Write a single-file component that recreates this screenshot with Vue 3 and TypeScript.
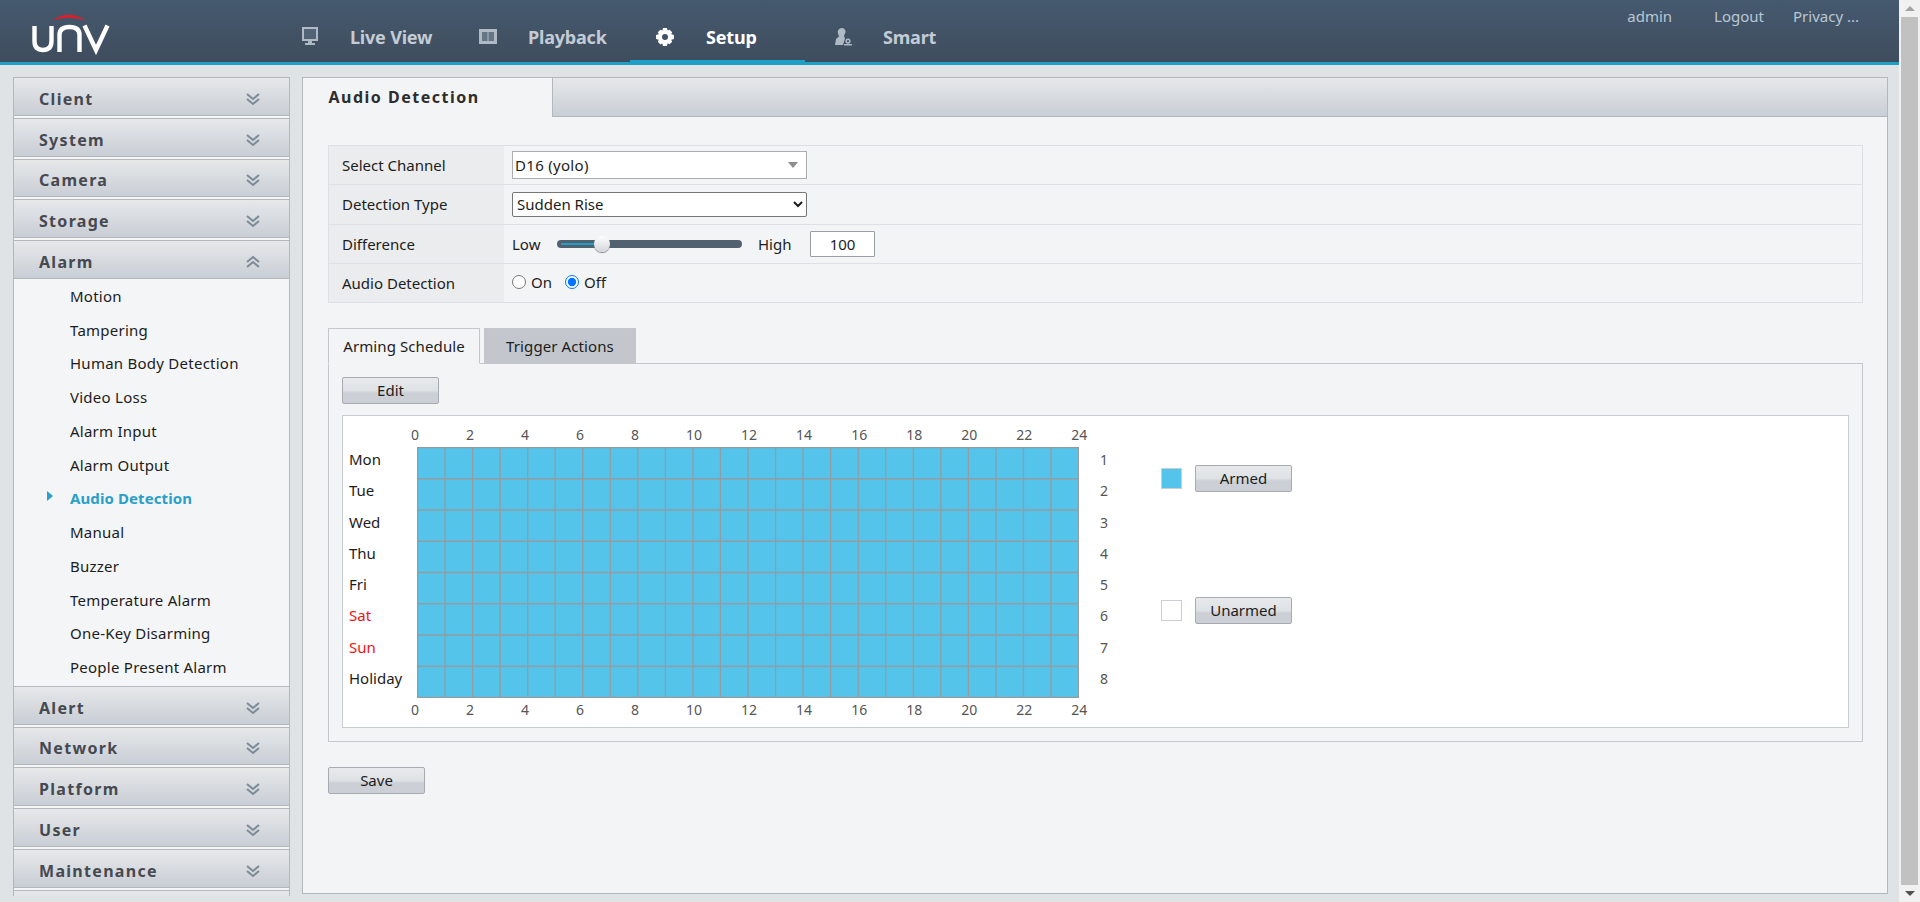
<script setup lang="ts">
import { ref } from "vue";

const navItems = [
  { label: "Live View", icon: "monitor", active: false },
  { label: "Playback", icon: "film", active: false },
  { label: "Setup", icon: "gear", active: true },
  { label: "Smart", icon: "user", active: false },
];

const menuBefore = ["Client", "System", "Camera", "Storage"];
const menuAfter = ["Alert", "Network", "Platform", "User", "Maintenance", ""];
const alarmItems = [
  "Motion",
  "Tampering",
  "Human Body Detection",
  "Video Loss",
  "Alarm Input",
  "Alarm Output",
  "Audio Detection",
  "Manual",
  "Buzzer",
  "Temperature Alarm",
  "One-Key Disarming",
  "People Present Alarm",
];

const days = ["Mon", "Tue", "Wed", "Thu", "Fri", "Sat", "Sun", "Holiday"];
const hours = [0, 2, 4, 6, 8, 10, 12, 14, 16, 18, 20, 22, 24];
const audioDetection = ref("off");
const detectionType = ref("rise");

// grid line positions of the weekly schedule
const cellW = 661 / 24;
const cellH = 250 / 8;
const colLines = Array.from({ length: 25 }, (_, i) => i * cellW + 0.5);
const rowLines = Array.from({ length: 9 }, (_, i) => i * cellH + 0.5);
</script>

<template>
  <div class="page">
    <div class="page__main">
      <header class="topbar">
        <svg class="topbar__logo" width="80" height="42" viewBox="0 0 80 42" fill="none">
          <path d="M21 7.500Q38 -4 55 7.500Q38 1.800 21 7.500Z" fill="#d8202c" />
          <path d="M3.500 13V28Q3.500 37 12 37Q20.500 37 20.500 28V13" stroke="#fff" stroke-width="4.400" />
          <path d="M28.500 39V22Q28.500 14 38.500 14Q48.500 14 48.500 22V39" stroke="#fff" stroke-width="4.400" />
          <path d="M53.500 12.500L65 37L76.500 12.500" stroke="#fff" stroke-width="4.400" />
        </svg>
        <nav class="topbar__nav">
          <a
            v-for="item in navItems"
            :key="item.label"
            class="topbar__link"
            :class="{ 'topbar__link--active': item.active }"
          >
            <svg class="topbar__icon" width="20" height="22" viewBox="0 0 20 22" fill="currentColor">
              <template v-if="item.icon === 'monitor'">
                <path d="M2 1h16v14H2z" />
                <path d="M4 3h12v10H4z" fill="#55677a" />
                <path d="M8 15h4v2H8zM5 17h10v2H5z" />
              </template>
              <template v-else-if="item.icon === 'film'">
                <path d="M1 3h18v15H1z" />
                <path d="M4 6h5.500v9H4zM10.500 6H16v9h-5.500z" fill="#6d7c8b" />
              </template>
              <template v-else-if="item.icon === 'gear'">
                <path
                  fill-rule="evenodd"
                  d="M8 2h4l.6 2.600 2-.9 2.600 2.600-1 2 2.800.7v4l-2.800.7 1 2-2.600 2.600-2-1L12 20H8l-.6-2.600-2 1-2.600-2.600 1-2L1 13V9l2.800-.7-1-2 2.600-2.600 2 .9zM10 8a3 3 0 1 0 0 6 3 3 0 0 0 0-6z"
                />
              </template>
              <template v-else>
                <path d="M9 2a3.600 3.600 0 0 1 3 5.600L11 10l1 2.500-2 6.500H2l1-6 3-2.500-1-3A4 4 0 0 1 9 2z" />
                <path d="M15 12.500a2.600 2.600 0 1 1 0 5.200 2.600 2.600 0 0 1 0-5.200zM15 14a1.100 1.100 0 1 0 0 2.200 1.100 1.100 0 0 0 0-2.200zM11 18h8v1.400h-8z" />
              </template>
            </svg>
            <span>{{ item.label }}</span>
          </a>
        </nav>
        <div class="topbar__user">
          <span class="topbar__admin">admin</span>
          <a>Logout</a>
          <a>Privacy ...</a>
        </div>
      </header>

      <div class="body">
        <aside class="sidebar">
          <div v-for="name in menuBefore" :key="name" class="sidebar__head">
            <span>{{ name }}</span>
            <svg width="16" height="14" viewBox="0 0 16 14" fill="none" stroke="#7d8a98" stroke-width="2">
              <path d="M2 2l6 5 6-5M2 7l6 5 6-5" />
            </svg>
          </div>
          <div class="sidebar__head sidebar__head--open">
            <span>Alarm</span>
            <svg width="16" height="14" viewBox="0 0 16 14" fill="none" stroke="#7d8a98" stroke-width="2">
              <path d="M2 7l6-5 6 5M2 12l6-5 6 5" />
            </svg>
          </div>
          <ul class="sidebar__list">
            <li
              v-for="item in alarmItems"
              :key="item"
              class="sidebar__item"
              :class="{ 'sidebar__item--active': item === 'Audio Detection' }"
            >
              {{ item }}
            </li>
          </ul>
          <div v-for="name in menuAfter" :key="name" class="sidebar__head">
            <template v-if="name">
              <span>{{ name }}</span>
              <svg width="16" height="14" viewBox="0 0 16 14" fill="none" stroke="#7d8a98" stroke-width="2">
                <path d="M2 2l6 5 6-5M2 7l6 5 6-5" />
              </svg>
            </template>
          </div>
        </aside>

        <main class="content">
          <div class="content__strip">
            <div class="content__title">Audio Detection</div>
          </div>

          <div class="content__inner">
            <div class="form">
              <div class="form__row">
                <div class="form__label">Select Channel</div>
                <div class="form__value">
                  <div class="combo">
                    <span>D16 (yolo)</span>
                    <i class="combo__arrow"></i>
                  </div>
                </div>
              </div>
              <div class="form__row">
                <div class="form__label">Detection Type</div>
                <div class="form__value">
                  <select v-model="detectionType" class="form__select">
                    <option value="rise">Sudden Rise</option>
                    <option value="fall">Sudden Fall</option>
                  </select>
                </div>
              </div>
              <div class="form__row">
                <div class="form__label">Difference</div>
                <div class="form__value">
                  <span class="slider__low">Low</span>
                  <div class="slider">
                    <div class="slider__fill"></div>
                    <div class="slider__thumb"></div>
                  </div>
                  <span class="slider__high">High</span>
                  <input class="form__input" value="100" />
                </div>
              </div>
              <div class="form__row">
                <div class="form__label">Audio Detection</div>
                <div class="form__value form__value--radio">
                  <label class="radio"><input v-model="audioDetection" type="radio" value="on" />On</label>
                  <label class="radio"><input v-model="audioDetection" type="radio" value="off" />Off</label>
                </div>
              </div>
            </div>

            <div class="tabs">
              <div class="tabs__tab tabs__tab--active">Arming Schedule</div>
              <div class="tabs__tab">Trigger Actions</div>
            </div>

            <section class="panel">
              <button class="btn panel__edit">Edit</button>
              <div class="schedule">
                <div class="schedule__chart">
                  <div class="schedule__hours">
                    <span v-for="h in hours" :key="h">{{ h }}</span>
                  </div>
                  <div class="schedule__middle">
                    <div class="schedule__days">
                      <span
                        v-for="(day, i) in days"
                        :key="day"
                        :class="{ 'schedule__day--weekend': i === 5 || i === 6 }"
                      >{{ day }}</span>
                    </div>
                    <svg class="schedule__grid" width="662" height="251" viewBox="0 0 662 251">
                      <rect width="662" height="251" fill="#55c4ea" />
                      <line
                        v-for="x in colLines"
                        :key="x"
                        :x1="x"
                        :x2="x"
                        y1="0"
                        y2="251"
                        stroke="#959ca1"
                        stroke-width="1.300"
                      />
                      <line
                        v-for="y in rowLines"
                        :key="y"
                        x1="0"
                        x2="662"
                        :y1="y"
                        :y2="y"
                        stroke="#959ca1"
                        stroke-width="1.300"
                      />
                    </svg>
                    <div class="schedule__nums">
                      <span v-for="(day, i) in days" :key="day">{{ i + 1 }}</span>
                    </div>
                  </div>
                  <div class="schedule__hours schedule__hours--bottom">
                    <span v-for="h in hours" :key="h">{{ h }}</span>
                  </div>
                </div>
                <div class="legend">
                  <div class="legend__row">
                    <i class="legend__swatch legend__swatch--on"></i>
                    <button class="btn">Armed</button>
                  </div>
                  <div class="legend__row">
                    <i class="legend__swatch"></i>
                    <button class="btn">Unarmed</button>
                  </div>
                </div>
              </div>
            </section>

            <button class="btn content__save">Save</button>
          </div>
        </main>
      </div>
    </div>

    <div class="scrollbar">
      <i class="scrollbar__up"></i>
      <div class="scrollbar__thumb"></div>
      <i class="scrollbar__down"></i>
    </div>
  </div>
</template>

<style scoped>
.page {
  display: flex;
  width: 1920px;
  height: 902px;
  overflow: hidden;
  background: #dfe3e6;
  color: #1c1c1c;
  font-family: "Noto Sans", "Open Sans", sans-serif;
  font-size: 14px;
}

.page__main {
  flex: 1;
  min-width: 0;
}

/* top bar */
.topbar {
  position: relative;
  box-sizing: border-box;
  display: flex;
  height: 65px;
  border-bottom: 3px solid #1ea0c6;
  background: linear-gradient(#45596f, #3f4d5d);
}

.topbar__logo {
  margin: 13px 0 0 31px;
}

.topbar__nav {
  display: flex;
  margin-left: 189px;
}

.topbar__link {
  display: flex;
  align-items: center;
  box-sizing: border-box;
  width: 175px;
  height: 60px;
  padding: 13px 0 0 0;
  color: #c3ccd5;
  font-size: 18px;
  font-weight: 700;
  letter-spacing: -0.2px;
}

.topbar__link:nth-child(1) {
  width: 178px;
}

.topbar__link:nth-child(2) {
  width: 152px;
}

.topbar__link:nth-child(3) {
  width: 175px;
  padding-left: 25px;
}

.topbar__link:nth-child(3) .topbar__icon {
  margin-right: 31px;
}

.topbar__link:nth-child(4) {
  margin-left: 28px;
}

.topbar__link--active {
  border-bottom: 2px solid #1ea0c6;
  height: 62px;
  color: #fff;
}

.topbar__icon {
  margin-right: 30px;
  opacity: 0.85;
}

.topbar__link--active .topbar__icon {
  opacity: 1;
}

.topbar__user {
  display: flex;
  margin-left: auto;
  padding: 6px 40px 0 0;
  gap: 29px;
  color: #b9c7d3;
  font-size: 15px;
}

.topbar__admin {
  margin-right: 13px;
}

/* page body */
.body {
  display: flex;
  gap: 12px;
  padding: 12px 11px 0 13px;
}

.sidebar {
  flex: none;
  width: 277px;
  height: 819px;
  overflow: hidden;
  box-sizing: border-box;
  border: solid #b4b8bb;
  border-width: 0 1px;
  background: #f4f5f7;
}

.sidebar__head {
  box-sizing: border-box;
  display: flex;
  align-items: center;
  justify-content: space-between;
  height: 38.75px;
  margin-bottom: 2px;
  padding: 5px 28px 0 25px;
  border-top: 1px solid #b4b8bb;
  border-bottom: 1px solid #b4b8bb;
  background: linear-gradient(#e6e8ea, #c9ced5);
  color: #46494f;
  font-size: 16px;
  font-weight: 700;
  letter-spacing: 1.3px;
}

.sidebar__head--open {
  margin-bottom: 0;
}

.sidebar__list {
  margin: 0;
  padding: 0 0 2px;
  list-style: none;
}

.sidebar__item {
  position: relative;
  height: 33.75px;
  padding-left: 56px;
  line-height: 34px;
  font-size: 15px;
  letter-spacing: 0.25px;
}

.sidebar__item--active {
  color: #2aa0c8;
  font-weight: 700;
  letter-spacing: 0.1px;
}

.sidebar__item--active::before {
  content: "";
  position: absolute;
  left: 33px;
  top: 10px;
  border: 5px solid transparent;
  border-left: 6px solid #2aa0c8;
  border-right: 0;
}

.content {
  flex: 1;
  height: 817px;
  box-sizing: border-box;
  border: 1px solid #b4b8bb;
  background: #f3f4f6;
}

.content__strip {
  height: 38px;
  border-bottom: 1px solid #b4b8bb;
  background: linear-gradient(#e6e8ea, #c9ced5);
}

.content__title {
  box-sizing: border-box;
  width: 250px;
  height: 39px;
  padding-left: 25.5px;
  border-right: 1px solid #b4b8bb;
  background: #f3f4f6;
  color: #2d2d2d;
  font-size: 16px;
  font-weight: 700;
  letter-spacing: 1.5px;
  line-height: 38px;
}

.content__inner {
  padding: 28px 24px 0 25px;
}

/* form table */
.form {
  border: 1px solid #dcdfe3;
  border-bottom: 0;
}

.form__row {
  display: flex;
  height: 39.25px;
  box-sizing: border-box;
  border-bottom: 1px solid #dcdfe3;
}

.form__label {
  flex: none;
  box-sizing: border-box;
  width: 175px;
  padding-left: 13px;
  background: #ebecee;
  line-height: 39px;
  font-size: 15px;
}

.form__value {
  display: flex;
  align-items: center;
  flex: 1;
  padding-left: 8px;
  font-size: 15px;
}

.combo {
  box-sizing: border-box;
  display: flex;
  align-items: center;
  justify-content: space-between;
  width: 295px;
  height: 28px;
  padding: 0 8px 0 2px;
  border: 1px solid #aaadb2;
  background: #fff;
  letter-spacing: 0.3px;
}

.combo__arrow {
  border: 5px solid transparent;
  border-top: 6px solid #8d8d8d;
  border-bottom: 0;
}

.form__select {
  box-sizing: border-box;
  width: 295px;
  height: 25px;
  border: 1px solid #767676;
  border-radius: 2px;
  background: #fff;
  color: #1c1c1c;
  font-family: inherit;
  font-size: 15px;
}

.slider__low {
  width: 45px;
}

.slider {
  position: relative;
  width: 185px;
  height: 8px;
  border-radius: 4px;
  background: #526170;
}

.slider__fill {
  width: 45px;
  height: 2px;
  margin: 3px 0 0 4px;
  background: #1ea0c6;
}

.slider__thumb {
  position: absolute;
  left: 37px;
  top: -4px;
  width: 16px;
  height: 16px;
  border-radius: 50%;
  background: linear-gradient(#fdfdfd, #d3d6da);
  box-shadow: 0 1px 1px #7c8792;
}

.slider__high {
  width: 52px;
  margin-left: 16px;
}

.form__input {
  box-sizing: border-box;
  width: 65px;
  height: 26px;
  border: 1px solid #9a9ea3;
  border-radius: 1px;
  background: #fff;
  color: #1c1c1c;
  font-family: inherit;
  font-size: 15px;
  text-align: center;
}

.form__value--radio {
  gap: 13px;
  padding-bottom: 2px;
}

.radio {
  display: flex;
  align-items: center;
  gap: 5px;
}

.radio input {
  width: 14px;
  height: 14px;
  margin: 0;
}

/* tabs */
.tabs {
  display: flex;
  gap: 4px;
  margin-top: 25px;
}

.tabs__tab {
  box-sizing: border-box;
  width: 152px;
  height: 36px;
  border: 1px solid #c4c8cd;
  background: #c3c7cd;
  font-size: 15px;
  line-height: 35px;
  text-align: center;
  letter-spacing: 0.1px;
}

.tabs__tab--active {
  position: relative;
  z-index: 1;
  border-bottom-color: #f3f4f6;
  background: #f3f4f6;
}

.panel {
  box-sizing: border-box;
  height: 379px;
  margin-top: -1px;
  padding: 13px 13px 0;
  border: 1px solid #c4c8cd;
}

.btn {
  box-sizing: border-box;
  width: 97px;
  height: 27px;
  padding: 0 0 2px;
  border: 1px solid #a6abb1;
  border-radius: 2px;
  background: linear-gradient(#e7e9eb, #dfe2e5 50%, #ccd0d6 60%, #ccd0d6);
  color: #1c1c1c;
  font-family: inherit;
  font-size: 15px;
}

.panel__edit {
  display: block;
}

/* schedule chart */
.schedule {
  box-sizing: border-box;
  display: flex;
  height: 313px;
  margin-top: 11px;
  border: 1px solid #c8ccd3;
  background: #fff;
}

.schedule__chart {
  width: 810px;
  padding-top: 10px;
}

.schedule__hours {
  display: grid;
  grid-template-columns: repeat(13, 55.02px);
  height: 21px;
  padding-left: 68px;
  color: #555;
  font-size: 14px;
  line-height: 18px;
}

.schedule__hours--bottom {
  margin-top: 3px;
}

.schedule__middle {
  display: flex;
}

.schedule__days,
.schedule__nums {
  display: grid;
  grid-template-rows: repeat(8, 31.3px);
  font-size: 15px;
  line-height: 25px;
}

.schedule__days {
  flex: none;
  width: 74px;
  padding-left: 6px;
  box-sizing: border-box;
}

.schedule__day--weekend {
  color: #f01414;
}

.schedule__grid {
  flex: none;
  display: block;
}

.schedule__nums {
  padding-left: 21px;
  color: #555;
  font-size: 14px;
  line-height: 26px;
}

.legend {
  display: flex;
  flex-direction: column;
  gap: 105px;
  margin: 49px 0 0 8px;
}

.legend__row {
  display: flex;
  align-items: center;
  gap: 13px;
}

.legend__swatch {
  box-sizing: border-box;
  width: 21px;
  height: 21px;
  border: 1px solid #cbced3;
  background: #fff;
}

.legend__swatch--on {
  background: #55c4ea;
}

.content__save {
  display: block;
  margin-top: 25px;
}

/* scrollbar */
.scrollbar {
  flex: none;
  display: flex;
  flex-direction: column;
  align-items: center;
  width: 21px;
  height: 902px;
  background: #f1f1f1;
}

.scrollbar__up,
.scrollbar__down {
  flex: none;
  width: 0;
  height: 0;
  margin: 6px 0;
  border: 5px solid transparent;
}

.scrollbar__up {
  border-top: 0;
  border-bottom: 5px solid #a3a3a3;
}

.scrollbar__down {
  border-bottom: 0;
  border-top: 5px solid #505050;
}

.scrollbar__thumb {
  flex: 1;
  width: 17px;
  background: #c1c1c1;
}
</style>
